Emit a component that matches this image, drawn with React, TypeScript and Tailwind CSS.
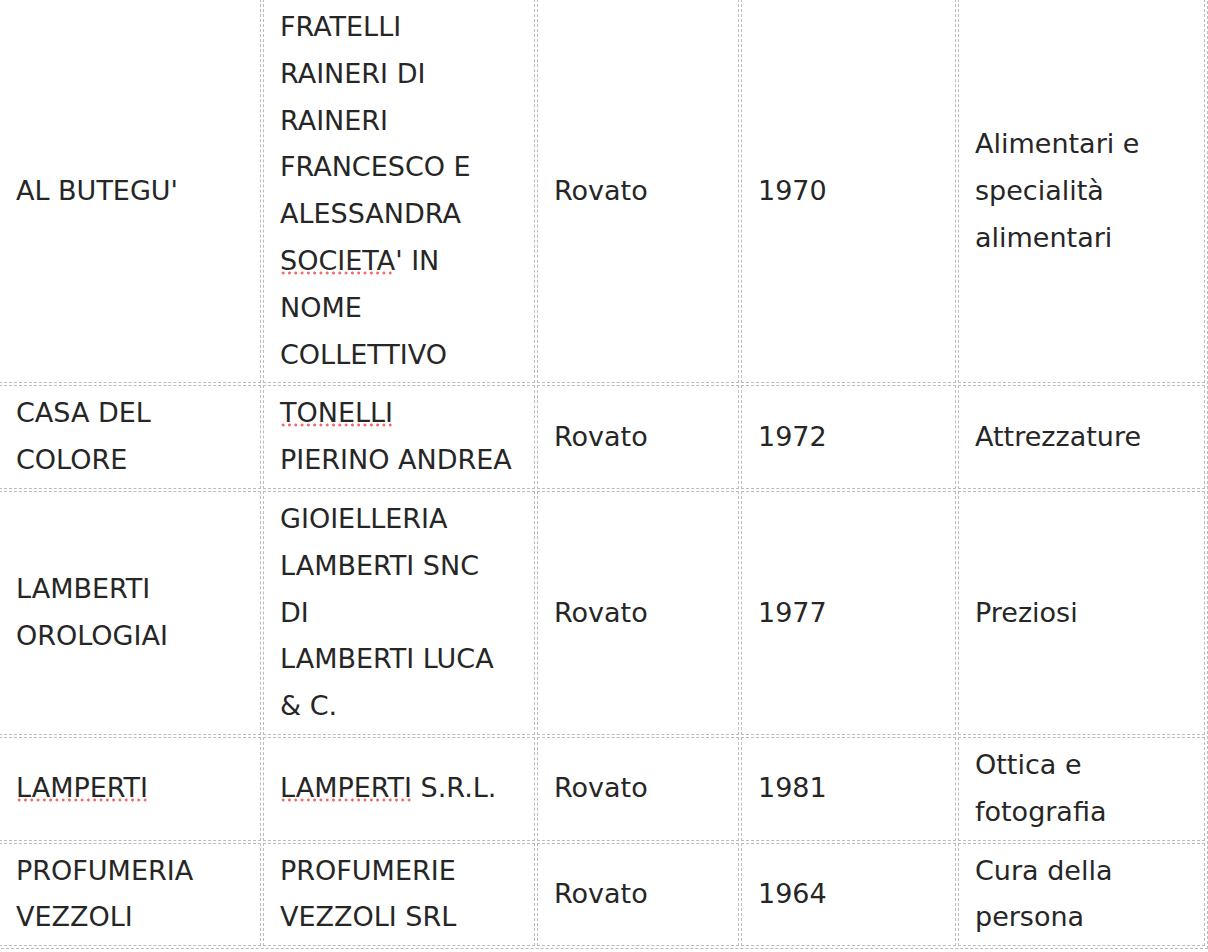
import type { ReactNode } from 'react'

type Row = {
  shop: ReactNode[]
  company: ReactNode[]
  town: string
  year: string
  sector: string[]
}

// spell-checker style dotted red underline
function Typo({ children }: { children: ReactNode }) {
  return (
    <span className="[background-image:radial-gradient(circle,#f26b6b_1.3px,transparent_1.8px)] [background-position:0_calc(100%-1px)] [background-repeat:repeat-x] [background-size:6.3px_4px]">
      {children}
    </span>
  )
}

const ROWS: Row[] = [
  {
    shop: ["AL BUTEGU'"],
    company: [
      'FRATELLI',
      'RAINERI DI',
      'RAINERI',
      'FRANCESCO E',
      'ALESSANDRA',
      <>
        <Typo>SOCIETA</Typo>' IN
      </>,
      'NOME',
      'COLLETTIVO',
    ],
    town: 'Rovato',
    year: '1970',
    sector: ['Alimentari e', 'specialità', 'alimentari'],
  },
  {
    shop: ['CASA DEL', 'COLORE'],
    company: [<Typo>TONELLI</Typo>, 'PIERINO ANDREA'],
    town: 'Rovato',
    year: '1972',
    sector: ['Attrezzature'],
  },
  {
    shop: ['LAMBERTI', 'OROLOGIAI'],
    company: ['GIOIELLERIA', 'LAMBERTI SNC', 'DI', 'LAMBERTI LUCA', '& C.'],
    town: 'Rovato',
    year: '1977',
    sector: ['Preziosi'],
  },
  {
    shop: [<Typo>LAMPERTI</Typo>],
    company: [
      <>
        <Typo>LAMPERTI</Typo> S.R.L.
      </>,
    ],
    town: 'Rovato',
    year: '1981',
    sector: ['Ottica e', 'fotografia'],
  },
  {
    shop: ['PROFUMERIA', 'VEZZOLI'],
    company: ['PROFUMERIE', 'VEZZOLI SRL'],
    town: 'Rovato',
    year: '1964',
    sector: ['Cura della', 'persona'],
  },
]

function Lines({ lines }: { lines: ReactNode[] }) {
  return (
    <>
      {lines.map((line, i) => (
        <span key={i}>
          {line}
          {i < lines.length - 1 && <br />}
        </span>
      ))}
    </>
  )
}

const CELL = 'border border-dashed border-[#bcbcbc] px-4 py-1 align-middle whitespace-nowrap'

export default function App() {
  return (
    <div className="min-h-[952px] overflow-hidden bg-white">
      <table className="-ml-1 -mt-1 w-[1212px] table-fixed border-separate border-spacing-[2px] border border-dashed border-[#bcbcbc] text-left font-['DejaVu_Sans',Verdana,sans-serif] text-[27px] leading-[46.8px] text-[#262626]">
        <colgroup>
          <col className="w-[262px]" />
          <col className="w-[272px]" />
          <col className="w-[202px]" />
          <col className="w-[215px]" />
          <col className="w-[247px]" />
        </colgroup>
        <tbody>
          {ROWS.map((row, i) => (
            <tr key={i}>
              <td className={CELL}>
                <Lines lines={row.shop} />
              </td>
              <td className={CELL}>
                <Lines lines={row.company} />
              </td>
              <td className={CELL}>{row.town}</td>
              <td className={CELL}>{row.year}</td>
              <td className={CELL}>
                <Lines lines={row.sector} />
              </td>
            </tr>
          ))}
        </tbody>
      </table>
    </div>
  )
}
